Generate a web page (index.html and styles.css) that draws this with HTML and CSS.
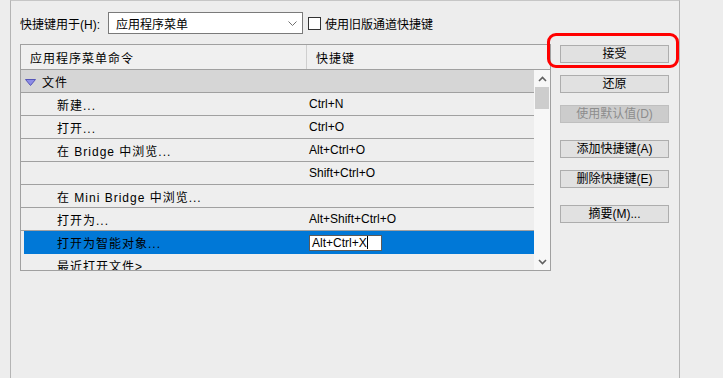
FILE: index.html
```html
<!DOCTYPE html>
<html lang="zh-CN">
<head>
    <meta charset="UTF-8">
    <title>键盘快捷键</title>
    <link rel="stylesheet" href="styles.css">
</head>
<body>
    <div class="dialog">
        <div class="options">
            <span class="options-label">快捷键用于(H):</span>
            <div class="select">
                <span>应用程序菜单</span>
                <svg class="select-arrow" width="9" height="5" viewBox="0 0 9 5"><path d="M0.5 0.5 L4.5 4.5 L8.5 0.5" fill="none" stroke="#707070" stroke-width="1"/></svg>
            </div>
            <span class="checkbox"></span>
            <span class="check-label">使用旧版通道快捷键</span>
        </div>

        <div class="main">
            <div class="table">
                <div class="table-head">
                    <div class="head-cmd">应用程序菜单命令</div>
                    <div class="head-key">快捷键</div>
                </div>
                <div class="table-body">
                    <div class="rows">
                        <div class="row group">
                            <svg class="twisty" width="11" height="7" viewBox="0 0 11 7"><polygon points="0.5,0.5 10.5,0.5 5.5,6.5" fill="#8c8ce6" stroke="#5656b8" stroke-width="1"/></svg>
                            <span>文件</span>
                        </div>
                        <div class="row"><div class="cmd">新建...</div><div class="key">Ctrl+N</div></div>
                        <div class="row"><div class="cmd">打开...</div><div class="key">Ctrl+O</div></div>
                        <div class="row"><div class="cmd">在 Bridge 中浏览...</div><div class="key">Alt+Ctrl+O</div></div>
                        <div class="row"><div class="cmd"></div><div class="key">Shift+Ctrl+O</div></div>
                        <div class="row"><div class="cmd">在 Mini Bridge 中浏览...</div><div class="key"></div></div>
                        <div class="row"><div class="cmd">打开为...</div><div class="key">Alt+Shift+Ctrl+O</div></div>
                        <div class="row selected">
                            <div class="cmd">打开为智能对象...</div>
                            <div class="key"><span class="key-input">Alt+Ctrl+X<span class="caret"></span></span></div>
                        </div>
                        <div class="row"><div class="cmd">最近打开文件&gt;</div><div class="key"></div></div>
                    </div>
                    <div class="scrollbar">
                        <div class="scroll-btn">
                            <svg width="9" height="6" viewBox="0 0 9 6"><path d="M1 5 L4.5 1.5 L8 5" fill="none" stroke="#606060" stroke-width="1.6"/></svg>
                        </div>
                        <div class="thumb"></div>
                        <div class="track"></div>
                        <div class="scroll-btn">
                            <svg width="9" height="6" viewBox="0 0 9 6"><path d="M1 1 L4.5 4.5 L8 1" fill="none" stroke="#606060" stroke-width="1.6"/></svg>
                        </div>
                    </div>
                </div>
            </div>

            <div class="buttons">
                <div class="highlight"></div>
                <button class="btn">接受</button>
                <button class="btn gap-s">还原</button>
                <button class="btn gap-s" disabled>使用默认值(D)</button>
                <button class="btn gap-l">添加快捷键(A)</button>
                <button class="btn gap-s">删除快捷键(E)</button>
                <button class="btn gap-l">摘要(M)...</button>
            </div>
        </div>
    </div>
</body>
</html>
```

FILE: styles.css
```css
body {
    margin: 0;
    background-color: #ededed;
    font-family: "Liberation Sans", "Noto Sans CJK SC", sans-serif;
    font-size: 12px;
    color: #000;
}

.dialog {
    box-sizing: border-box;
    width: 670px;
    height: 378px;
    margin-left: 10px;
    padding: 11px 0 0 9px;
    border-left: 1px solid #b4b4b4;
    border-right: 1px solid #b4b4b4;
    border-top: 1px solid #c6c6c6;
}

.options {
    display: flex;
    align-items: center;
    height: 22px;
}

.options-label {
    width: 88px;
}

.select {
    box-sizing: border-box;
    width: 195px;
    height: 22px;
    padding: 0 5px 0 7px;
    display: flex;
    align-items: center;
    justify-content: space-between;
    background-color: #fff;
    border: 1px solid #7a7a7a;
}

.checkbox {
    box-sizing: border-box;
    width: 13px;
    height: 13px;
    margin-left: 5px;
    border: 1px solid #333;
    background-color: #fff;
}

.check-label {
    margin-left: 4px;
}

.main {
    display: flex;
    margin-top: 10px;
}

/* 命令列表 */
.table {
    box-sizing: border-box;
    width: 531px;
    height: 227px;
    display: flex;
    flex-direction: column;
    border: 1px solid #a0a0a0;
    background-color: #eeeeee;
}

.table-head {
    box-sizing: border-box;
    height: 25px;
    display: flex;
    align-items: center;
    border-bottom: 1px solid #a0a0a0;
    background-color: #f0f0f0;
    letter-spacing: 1px;
}

.head-cmd {
    box-sizing: border-box;
    width: 286px;
    height: 100%;
    padding-left: 9px;
    display: flex;
    align-items: center;
    border-right: 1px solid #cfcfcf;
}

.head-key {
    padding-left: 9px;
}

.table-body {
    flex: 1;
    display: flex;
    overflow: hidden;
}

.rows {
    width: 513px;
    overflow: hidden;
}

.row {
    box-sizing: border-box;
    height: 23px;
    display: flex;
    align-items: center;
    border-bottom: 1px solid #a0a0a0;
}

.row .cmd {
    box-sizing: border-box;
    width: 286px;
    padding-left: 36px;
    letter-spacing: 1px;
    white-space: nowrap;
}

.row .key {
    padding-left: 2px;
}

.row.group {
    background-color: #d6d6d6;
    padding-left: 4px;
    letter-spacing: 1px;
}

.twisty {
    margin: 2px 6px 0 0;
}

.row.selected {
    margin-left: 3px;
    background-color: #0078d7;
    border-bottom: none;
}

.row.selected .cmd {
    width: 283px;
    padding-left: 33px;
}

.key-input {
    box-sizing: border-box;
    display: flex;
    align-items: center;
    width: 73px;
    height: 16px;
    padding-left: 2px;
    background-color: #fff;
    border: 1px solid #5a5a5a;
}

.caret {
    width: 1px;
    height: 13px;
    background-color: #000;
}

.scrollbar {
    width: 16px;
    display: flex;
    flex-direction: column;
    background-color: #f7f7f7;
}

.scroll-btn {
    height: 17px;
    display: flex;
    align-items: center;
    justify-content: center;
}

.thumb {
    height: 22px;
    margin: 0 1px;
    background-color: #cdcdcd;
}

.track {
    flex: 1;
}

/* 右侧按钮 */
.buttons {
    position: relative;
    display: flex;
    flex-direction: column;
    margin-left: 9px;
}

.btn {
    box-sizing: border-box;
    width: 109px;
    height: 18px;
    margin-top: 1px;
    padding: 0;
    font-family: inherit;
    font-size: 12px;
    line-height: 16px;
    color: #000;
    background-color: #e1e1e1;
    border: 1px solid #adadad;
}

.btn.gap-s {
    margin-top: 12px;
}

.btn.gap-l {
    margin-top: 17px;
}

.btn:disabled {
    color: #8d8d8d;
    background-color: #cccccc;
    border-color: #bfbfbf;
}

.highlight {
    position: absolute;
    left: -13px;
    top: -11px;
    box-sizing: border-box;
    width: 132px;
    height: 35px;
    border: 3px solid #ff0000;
    border-radius: 9px;
}
```
